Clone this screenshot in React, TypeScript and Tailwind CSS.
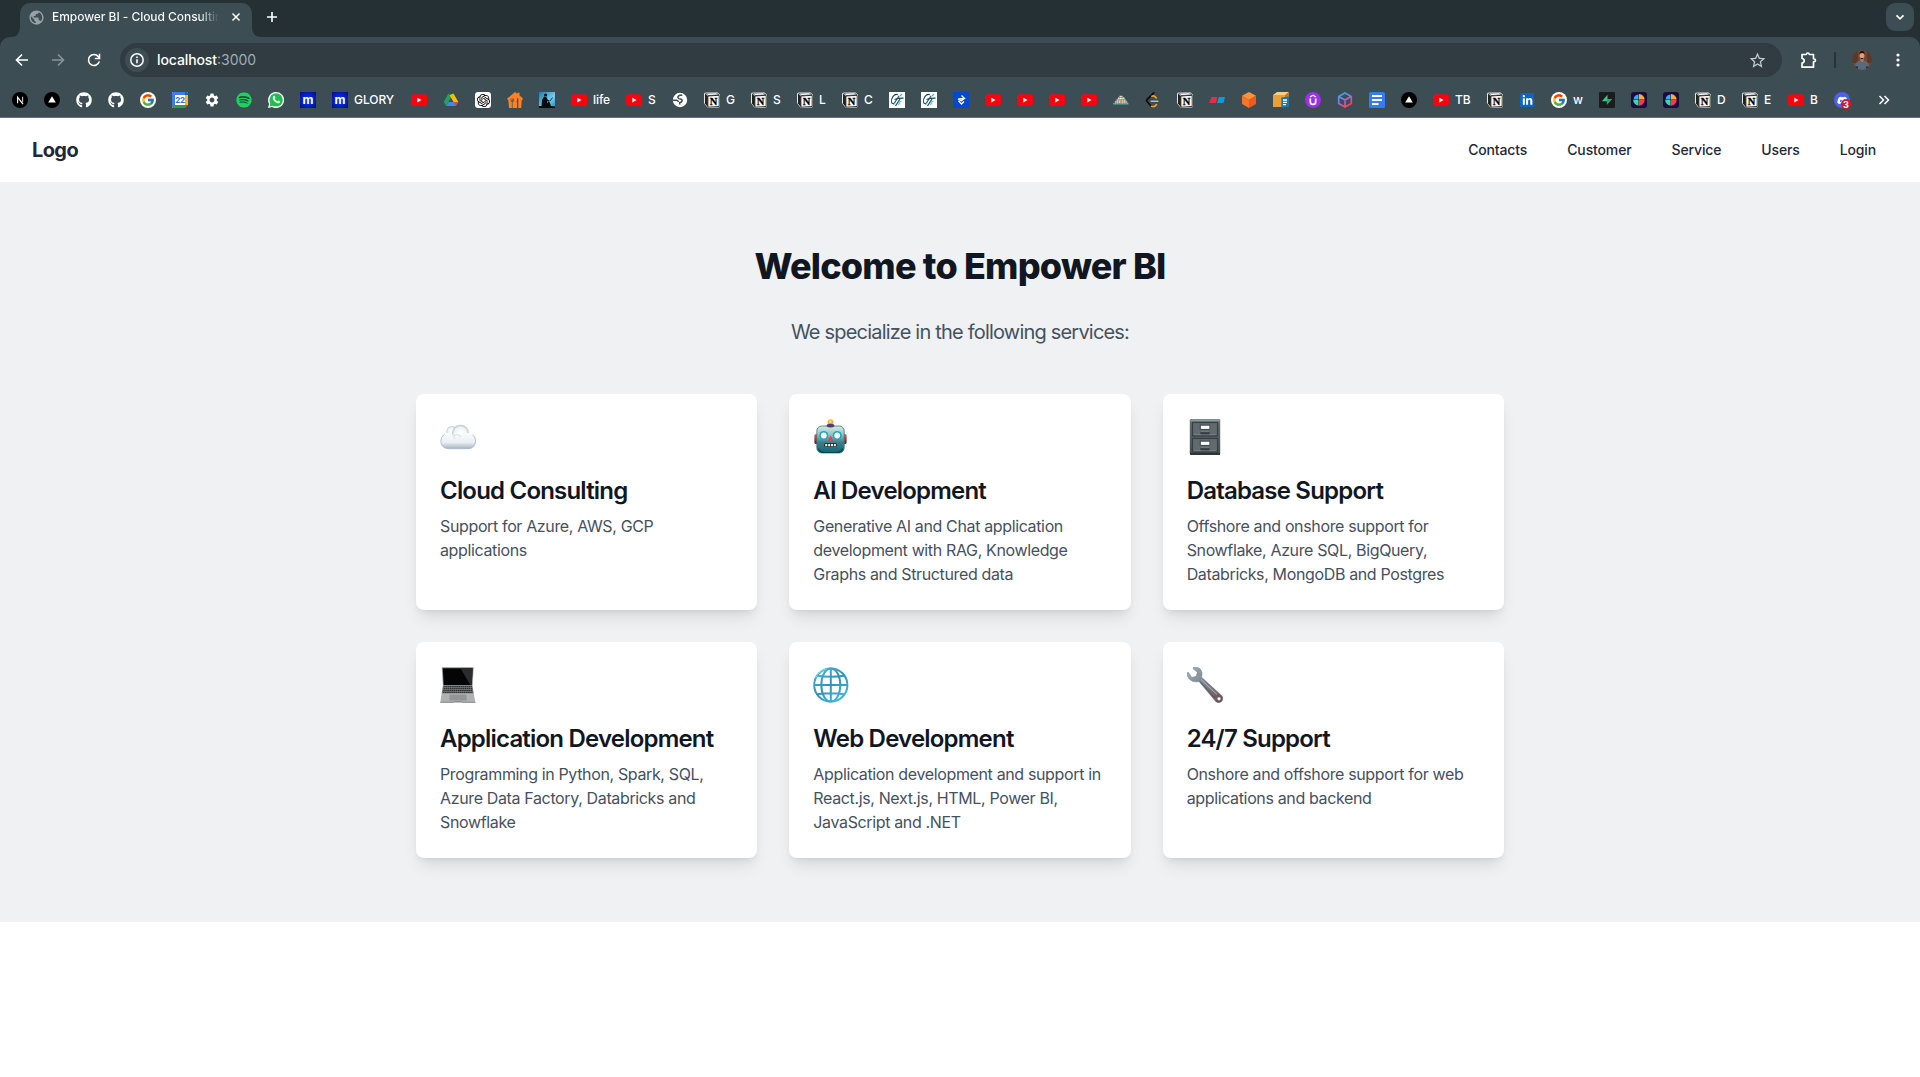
import React from "react";
import { FaGithub, FaSpotify, FaWhatsapp, FaLinkedinIn, FaDiscord } from "react-icons/fa6";
import { FcGoogle } from "react-icons/fc";
import { SiOpenai } from "react-icons/si";
import { MdSettings, MdPublic, MdStarOutline } from "react-icons/md";

type Box = { children: React.ReactNode };

const Svg = ({ children }: Box) => (
  <svg viewBox="0 0 16 16" className="h-4 w-4 shrink-0">
    {children}
  </svg>
);

const NextIcon = () => (
  <Svg>
    <circle cx="8" cy="8" r="8" fill="#000" />
    <path d="M5.600 11.200V5.200l5.400 7" fill="none" stroke="#fff" strokeWidth="1.200" />
    <path d="M10.600 4.800v5.400" stroke="#ccc" strokeWidth="1.100" />
  </Svg>
);
const VercelIcon = () => (
  <Svg>
    <circle cx="8" cy="8" r="8" fill="#000" />
    <path d="M8 4.200l3.800 6.400H4.200z" fill="#fff" />
  </Svg>
);
const GithubIcon = () => <FaGithub className="h-4 w-4 shrink-0 text-white" />;
const GoogleIcon = () => (
  <span className="flex h-4 w-4 shrink-0 items-center justify-center rounded-full bg-white">
    <FcGoogle className="h-[14px] w-[14px]" />
  </span>
);
const CalendarIcon = () => (
  <Svg>
    <path d="M0 0h16v12l-4 4H0z" fill="#fff" />
    <path d="M0 1q0-1 1-1h12v3H3v10H0z" fill="#3b7ded" />
    <path d="M13 0h2q1 0 1 1v2h-3z" fill="#1a5fc8" />
    <path d="M13 3h3v10h-3z" fill="#fbbc04" />
    <path d="M0 13h13v3H1q-1 0-1-1z" fill="#2b9e4b" />
    <path d="M13 13h3l-3 3z" fill="#ea4335" />
    <path d="M3 3h10v10H3z" fill="#fff" />
    <text x="7.900" y="11" textAnchor="middle" fontSize="8" fontWeight="700" letterSpacing="-.4" fontFamily="Inter, sans-serif" fill="#2b6fe0">
      22
    </text>
  </Svg>
);
const GearIcon = () => <MdSettings className="h-4 w-4 shrink-0 text-white" />;
const SpotifyIcon = () => (
  <span className="flex h-4 w-4 shrink-0 rounded-full bg-[#27333a]">
    <FaSpotify className="h-4 w-4 text-[#1ed15f]" />
  </span>
);
const WhatsappIcon = () => (
  <span className="relative flex h-4 w-4 shrink-0 items-center justify-center">
    <Svg>
      <path d="M8 0a8 8 0 1 1-3.800 15L0 16l1.100-4A8 8 0 0 1 8 0z" fill="#fff" />
      <circle cx="8.100" cy="7.900" r="6.700" fill="#1fbf4f" />
      <path d="M1.600 14.400l1-3.600 2.600 2.600z" fill="#1fbf4f" />
      <path
        d="M5.400 4.200c.4-.5 1.200-.5 1.400 0l.6 1.400c.1.4-.7 1-.7 1.200.5 1.200 1.400 2 2.600 2.500.3.1.8-.9 1.200-.8l1.400.7c.4.2.3 1.300-.5 1.800-2 1.200-6.600-2-6.600-5 0-.7.2-1.300.6-1.800z"
        fill="#fff"
      />
    </Svg>
  </span>
);
const MIcon = () => (
  <span className="flex h-4 w-4 shrink-0 items-center justify-center bg-[radial-gradient(circle,#0a2cf0_20%,#03107c_100%)] pb-px font-['Inter',sans-serif] text-[12px] leading-none font-bold text-white">
    m
  </span>
);
const YoutubeIcon = () => (
  <Svg>
    <rect x="0" y="2.300" width="16" height="11.600" rx="2.600" fill="#f8040f" />
    <path d="M6.300 5.800l4.200 2.300-4.200 2.300z" fill="#fff" />
  </Svg>
);
const DriveIcon = () => (
  <Svg>
    <path d="M5.500 1.500L.7 10l2.500 4L8 5.600z" fill="#1da462" />
    <path d="M5.500 1.500h5L8 5.600z" fill="#188038" />
    <path d="M10.500 1.500L15.300 10h-4.800L6.500 3.300z" fill="#fbbc04" />
    <path d="M5.500 10h9.800l-2.400 4H3.200z" fill="#4285f4" />
    <path d="M10.500 10h4.800l-2.400 4z" fill="#ea4335" />
  </Svg>
);
const OpenAiIcon = () => (
  <span className="flex h-4 w-4 shrink-0 items-center justify-center rounded-[3px] bg-white">
    <SiOpenai className="h-[13px] w-[13px] text-black" />
  </span>
);
const TakeawayIcon = () => (
  <Svg>
    <path
      d="M8 0l2.200 1.800V.8h2.300v2.800L16 6.600l-1.300 1.800-.5 7.600h-2.900V6.200c-1.500 1-1.700 3-1.700 4.400h.7V16H2L1.400 8.600 0 6.800z"
      fill="#ff8325"
    />
    <path d="M4 6.500v2.800M5.300 6.500v2.800M6.600 6.500v2.800M4 9.300h2.600M5.300 9.300V16M10.500 6v10" stroke="#3c4d54" strokeWidth=".7" fill="none" />
  </Svg>
);
const KindleIcon = () => (
  <Svg>
    <defs>
      <linearGradient id="kindle" x1="0" y1="0" x2="1" y2="1">
        <stop offset="0" stopColor="#1580ad" />
        <stop offset=".6" stopColor="#7accec" />
        <stop offset="1" stopColor="#2089b8" />
      </linearGradient>
    </defs>
    <path d="M0 0h16v16H0z" fill="url(#kindle)" />
    <circle cx="6.600" cy="3" r="1.600" fill="#050b0e" />
    <path d="M0 16v-2h2.500L3 8l2-3.500 2.500.8L9 8.300l1.500-.3-.3 1-2.200.5.5 1.800L10 8.500l2 5.500 4 .5V16z" fill="#050b0e" />
    <path d="M11 9l2.500-3.500" stroke="#050b0e" strokeWidth=".8" />
  </Svg>
);
const GlobeIcon = () => (
  <Svg>
    <circle cx="8" cy="8" r="7.200" fill="#fff" />
    <path d="M10.300 3.300H8.200Q6 3.600 5.900 5.500q.2 1.500 2.200 1.600 2 .1 2 1.700-.2 1.600-2.300 1.700v2M1 8.300h3.700q1.500.2 1.600 1.700" fill="none" stroke="#3c4d54" strokeWidth="1.500" />
  </Svg>
);
const NotionIcon = () => (
  <Svg>
    <path d="M1.600.6L11.800 0q1 0 1.600.5l2 1.700q.6.500.6 1.300v10.300q0 1.600-1.500 1.800L5 16q-1 0-1.700-.8L.7 12Q0 11.200 0 10.400V2.300Q0 .8 1.600.6z" fill="#fff" />
    <path d="M.9 1.500l2.900 2.500v11L.9 11.400z" fill="#222" />
    <path d="M1.600 1.200L12 .7l2.800 2.100-10.600.8z" fill="#fff" stroke="#111" strokeWidth=".6" />
    <path d="M3.900 4l11.300-.7v11.200l-11.300.7z" fill="#fff" stroke="#000" strokeWidth=".8" />
    <text x="9.600" y="13.100" textAnchor="middle" fontSize="10.500" fontWeight="700" fontFamily="Liberation Serif, serif" fill="#000" stroke="#000" strokeWidth=".3">
      N
    </text>
  </Svg>
);
const SwooshIcon = () => (
  <Svg>
    <path d="M0 0h16v16H0z" fill="#fff" />
    <path d="M8.800 2.600C5 1.500 1.600 6.500 2.600 10.400c.6 2 2.700 1 3.600-.6l4-6" fill="none" stroke="#1b4465" strokeWidth="1.100" />
    <path d="M5.500 7.500q4-1.500 9-1.300M6.500 14l4.500-7" fill="none" stroke="#1b4465" strokeWidth="1.200" />
    <path d="M4.500 13l2-3M9 10.500l3.500-1M11 4l2-2M9.500 13l1-2" stroke="#48b5d6" strokeWidth="1.100" />
  </Svg>
);
const DecagonIcon = () => (
  <Svg>
    <path d="M0 0h16v16H0z" fill="#0547cf" />
    <path d="M8.500 3.500l3 3-6 .5M5 7l3.500 1.800L11 6.500M5.500 8.800l3 3.200 2.500-2.500" stroke="#fff" strokeWidth="1.300" fill="none" />
  </Svg>
);
const DotsMountainIcon = () => (
  <Svg>
    <path d="M6.500 4.500h3" stroke="#efe6cf" strokeWidth="1.700" strokeDasharray="1.400 .3" />
    <path d="M5 6.300h6.500" stroke="#fff1d8" strokeWidth="1.700" strokeDasharray="1.400 .3" />
    <path d="M3.800 8.200h9" stroke="#f2b67c" strokeWidth="1.700" strokeDasharray="1.400 .3" />
    <path d="M2.200 10h12" stroke="#fff1d8" strokeWidth="1.700" strokeDasharray="1.400 .3" />
    <path d="M.3 11.800h15.400" stroke="#58c6c3" strokeWidth="1.500" strokeDasharray="1.400 .3" />
    <path d="M1.500 10.400l5-5.900M14.500 10.400l-5-5.900" stroke="#58c6c3" strokeWidth="1" strokeDasharray="1.300 .6" />
  </Svg>
);
const LeetcodeIcon = () => (
  <Svg>
    <path d="M8.800.9L2 7.700q-.8.900 0 1.800l4 4.500q.8.900 2 .9" fill="none" stroke="#0a0a0a" strokeWidth="1.700" strokeLinecap="round" />
    <path d="M6.600 14.300q2.300 1 3.600-.4l1.300-1.300M7 4.200q1.500-.7 2.700.3l1.500 1.500" fill="none" stroke="#f7a01d" strokeWidth="1.700" strokeLinecap="round" />
    <path d="M6.300 9.300h6.500" stroke="#b9b9b9" strokeWidth="1.600" strokeLinecap="round" />
  </Svg>
);
const ParallelogramIcon = () => (
  <Svg>
    <path d="M2.500 5h6L6.800 11H0z" fill="#ee2846" />
    <path d="M9.800 5H16l-1.500 6H8z" fill="#0b9bdd" />
  </Svg>
);
const CubeIcon = () => (
  <Svg>
    <path d="M8 0l7 3.800L8 8 1 3.800z" fill="#ff9138" />
    <path d="M1 3.800L8 8v8l-7-4z" fill="#fb7527" />
    <path d="M15 3.800L8 8v8l7-4z" fill="#ee5a1f" />
  </Svg>
);
const PackageIcon = () => (
  <Svg>
    <path d="M0 3l4-3h12l-3.500 3z" fill="#f8cd85" />
    <path d="M0 3h12.500v12H0z" fill="#eaa032" />
    <path d="M12.500 3L16 0v12l-3.500 3z" fill="#c47c19" />
    <path d="M8.300 5.500l7.700-1v10.300l-7.700 1z" fill="#1678ad" />
    <path d="M10 8h4M10 10.300h4M10 12.600h3" stroke="#fff" strokeWidth="1.300" />
  </Svg>
);
const UdemyIcon = () => (
  <Svg>
    <circle cx="8" cy="8" r="8" fill="#9b30e6" />
    <path d="M5.300 6.500v3.200q0 2.700 2.700 2.700t2.700-2.700V6.500" fill="none" stroke="#fff" strokeWidth="1.700" />
    <path d="M5 4.900l3-1.700 3 1.700" fill="none" stroke="#fff" strokeWidth="1.200" />
  </Svg>
);
const HexIcon = () => (
  <Svg>
    <defs>
      <linearGradient id="hex" gradientUnits="userSpaceOnUse" x1="2" y1="1" x2="11" y2="15">
        <stop offset="0" stopColor="#18b5dc" />
        <stop offset=".45" stopColor="#8f75e4" />
        <stop offset="1" stopColor="#ff3c4c" />
      </linearGradient>
    </defs>
    <path d="M8 .9l6.300 3.500v7.200L8 15.100l-6.300-3.500V4.400zM1.700 4.400L8 8l6.300-3.600M8 8v7" fill="none" stroke="url(#hex)" strokeWidth="1.700" />
  </Svg>
);
const DocsIcon = () => (
  <Svg>
    <rect width="16" height="16" rx="1.500" fill="#2f7ff0" />
    <path d="M3 4h10M3 8h10M3 12h6.500" stroke="#fff" strokeWidth="2" />
  </Svg>
);
const LinkedinIcon = () => (
  <span className="flex h-4 w-4 shrink-0 items-center justify-center">
    <span className="flex h-[14px] w-[14px] items-center justify-center rounded-[1px] bg-[#0a66c2]">
      <FaLinkedinIn className="h-[11px] w-[11px] text-white" />
    </span>
  </span>
);
const SupabaseIcon = () => (
  <Svg>
    <rect width="16" height="16" rx="1" fill="#1b1d1d" />
    <path d="M8.500 2.800v6.400H2.900z" fill="#34c98b" />
    <path d="M7.800 13V6.900h5.500z" fill="#2aa873" />
  </Svg>
);
const PieIcon = () => (
  <Svg>
    <rect width="16" height="16" rx="3" fill="#1c0b3f" />
    <path d="M7.500 7.500h-5a5.500 5.500 0 0 1 5-5z" fill="#3ba7f5" />
    <path d="M8 7.500V2a5.800 5.800 0 0 1 5.700 5.500z" fill="#fdb022" />
    <path d="M7.500 8v5.700A5.800 5.800 0 0 1 2.200 8z" fill="#3fd991" />
    <path d="M8 8h5.700A5.800 5.800 0 0 1 8 13.700z" fill="#f5375c" />
  </Svg>
);
const DiscordIcon = () => (
  <span className="relative flex h-4 w-4 shrink-0 items-center justify-center rounded-full bg-[#4c62e6]">
    <FaDiscord className="h-[11px] w-[11px] text-white" />
    <span className="absolute -right-px -bottom-px flex h-[10px] w-[10px] items-center justify-center rounded-full bg-[#e5121f] font-['Inter',sans-serif] text-[9px] leading-none font-bold text-white">
      3
    </span>
  </span>
);

const bookmarks: { icon: React.FC; label?: string; width?: string }[] = [
  { icon: NextIcon },
  { icon: VercelIcon },
  { icon: GithubIcon },
  { icon: GithubIcon },
  { icon: GoogleIcon },
  { icon: CalendarIcon },
  { icon: GearIcon },
  { icon: SpotifyIcon },
  { icon: WhatsappIcon },
  { icon: MIcon },
  { icon: MIcon, label: "GLORY", width: "w-[79px]" },
  { icon: YoutubeIcon },
  { icon: DriveIcon },
  { icon: OpenAiIcon },
  { icon: TakeawayIcon },
  { icon: KindleIcon },
  { icon: YoutubeIcon, label: "life", width: "w-[55px]" },
  { icon: YoutubeIcon, label: "S", width: "w-[46px]" },
  { icon: GlobeIcon },
  { icon: NotionIcon, label: "G", width: "w-[47px]" },
  { icon: NotionIcon, label: "S", width: "w-[46px]" },
  { icon: NotionIcon, label: "L", width: "w-[45px]" },
  { icon: NotionIcon, label: "C", width: "w-[47px]" },
  { icon: SwooshIcon },
  { icon: SwooshIcon },
  { icon: DecagonIcon },
  { icon: YoutubeIcon },
  { icon: YoutubeIcon },
  { icon: YoutubeIcon },
  { icon: YoutubeIcon },
  { icon: DotsMountainIcon },
  { icon: LeetcodeIcon },
  { icon: NotionIcon },
  { icon: ParallelogramIcon },
  { icon: CubeIcon },
  { icon: PackageIcon },
  { icon: UdemyIcon },
  { icon: HexIcon },
  { icon: DocsIcon },
  { icon: VercelIcon },
  { icon: YoutubeIcon, label: "TB", width: "w-[54px]" },
  { icon: NotionIcon },
  { icon: LinkedinIcon },
  { icon: GoogleIcon, label: "w", width: "w-12" },
  { icon: SupabaseIcon },
  { icon: PieIcon },
  { icon: PieIcon },
  { icon: NotionIcon, label: "D", width: "w-[47px]" },
  { icon: NotionIcon, label: "E", width: "w-[46px]" },
  { icon: YoutubeIcon, label: "B", width: "w-[46px]" },
  { icon: DiscordIcon },
];

const CloudArt = () => (
  <svg viewBox="0 0 36 36" className="h-9 w-9">
    <defs>
      <radialGradient id="puff" cx=".5" cy=".5" r=".5">
        <stop offset="0" stopColor="#ffffff" />
        <stop offset=".7" stopColor="#f1f5f8" />
        <stop offset="1" stopColor="#b7c5d1" />
      </radialGradient>
      <linearGradient id="cloudBase" x1="0" y1="0" x2="0" y2="1">
        <stop offset="0" stopColor="#fafcfd" />
        <stop offset=".6" stopColor="#eaeff3" />
        <stop offset="1" stopColor="#a5b4c1" />
      </linearGradient>
    </defs>
    <circle cx="12" cy="12.500" r="5.500" fill="url(#puff)" />
    <circle cx="20.500" cy="14.300" r="8.500" fill="url(#puff)" />
    <path
      d="M8.500 29.700C4 29.700.8 26.500.8 22.100s3-8 7.400-8c2 0 3.500.7 4.700 1.800 2.300-2 7.500-2.200 9.600.1 1.400-1.300 3-2 5.100-2 4.300 0 8 3.200 8 7.900s-3.200 7.800-7.500 7.800z"
      fill="url(#cloudBase)"
    />
    <path d="M4 15.500Q.8 18 .8 22.100q.3 7 7.700 7.600h19.600q7-.5 7.500-7.800-.2-4-2.800-6.200" fill="none" stroke="#aab9c6" strokeWidth=".9" />
    <path d="M13 16.500c1.100 1 1.900 2 2 3.200M13 17q4.500-3 8 .8" fill="none" stroke="#cbd6df" strokeWidth=".9" />
  </svg>
);

const RobotArt = () => (
  <svg viewBox="0 0 36 36" className="h-9 w-9">
    <defs>
      <linearGradient id="robot" x1="0" y1="0" x2="0" y2="1">
        <stop offset="0" stopColor="#d3ebe7" />
        <stop offset=".35" stopColor="#8cbfc0" />
        <stop offset=".6" stopColor="#39828c" />
        <stop offset="1" stopColor="#146473" />
      </linearGradient>
      <linearGradient id="ear" x1="0" y1="0" x2="0" y2="1">
        <stop offset="0" stopColor="#f0595a" />
        <stop offset="1" stopColor="#4c1720" />
      </linearGradient>
    </defs>
    <g transform="translate(.5 -.5)">
      <rect x=".9" y="15.500" width="4" height="10" rx="1.600" fill="url(#ear)" />
      <rect x="29.100" y="15.500" width="4" height="10" rx="1.600" fill="url(#ear)" />
      <circle cx="17" cy="3.700" r="3" fill="#f6ae35" />
      <circle cx="16.800" cy="2.900" r="1.500" fill="#ffd968" />
      <rect x="3.300" y="7.500" width="27.400" height="27" rx="5" fill="url(#robot)" stroke="#43777d" strokeWidth=".8" />
      <path d="M13 7.500q0-2.300 4-2.300t4 2.300q-1 1.500-4 1.500t-4-1.500z" fill="#533b71" />
      <path d="M5 30q1 4 6 4h12q5 0 6-4" fill="none" stroke="#0c4450" strokeWidth="1.200" />
      <circle cx="10.300" cy="17" r="4.500" fill="#1fa5bd" />
      <circle cx="23.700" cy="17" r="4.500" fill="#1fa5bd" />
      <circle cx="10.300" cy="17" r="2.900" fill="#f4feff" />
      <circle cx="23.700" cy="17" r="2.900" fill="#f4feff" />
      <path d="M17 16.800l2.800 5.500h-5.600z" fill="#e0474c" />
      <rect x="10.500" y="24.600" width="13" height="4" rx="1.600" fill="#25333c" />
      <path d="M11.700 26.600h11" stroke="#f1e9dc" strokeWidth="2.400" strokeDasharray="2 .9" />
    </g>
  </svg>
);

const CabinetArt = () => (
  <svg viewBox="0 0 36 36" className="h-9 w-9">
    <defs>
      <linearGradient id="cab" x1="0" y1="0" x2="0" y2="1">
        <stop offset="0" stopColor="#78868a" />
        <stop offset=".12" stopColor="#5f6a6e" />
        <stop offset="1" stopColor="#454d51" />
      </linearGradient>
    </defs>
    <rect x="2.800" width="30.400" height="36" rx="1.200" fill="url(#cab)" />
    <path d="M3.300 1.300h29.400" stroke="#8b999d" strokeWidth="1.600" />
    <path d="M3 34.900h30" stroke="#282e32" strokeWidth="1.600" />
    {[3.5, 19.5].map((y) => (
      <g key={y}>
        <rect x="5.500" y={y} width="25" height="13.500" fill="#616b6f" stroke="#363e42" strokeWidth="1.100" />
        <path d={`M7 ${y + 12}h22`} stroke="#79868a" strokeWidth=".7" />
        <rect x="12.800" y={y + 2.2} width="10.400" height="5" fill="#3a4246" />
        <rect x="13.800" y={y + 3.2} width="8.600" height="3.200" fill="#fbfcfc" />
        <rect x="13.300" y={y + 9} width="9.400" height="2.800" rx="1" fill="#343b3f" />
        <path d={`M13.800 ${y + 9.2}h8.400`} stroke="#8b979b" strokeWidth=".7" />
      </g>
    ))}
  </svg>
);

const LaptopArt = () => (
  <svg viewBox="0 0 36 36" className="h-9 w-9">
    <path d="M1.800.3h31.800l-1 18H2.900z" fill="#8d8f91" />
    <path d="M2.800 1.200h29.800l-.9 17H3.700z" fill="#050505" />
    <path d="M20.500 1.200h12.100l-.9 17h-1.200z" fill="#2b2c2e" />
    <path d="M3 18.200h29.400l1.400 8.600H1.600z" fill="#77797b" />
    <path d="M3.700 19.700h28.200M3.500 21.600h28.600M3.200 23.500h29.200M2.900 25.400h29.800" stroke="#2f3133" strokeWidth="1.200" strokeDasharray="1.600 .5" />
    <path d="M1.600 26.800h32.200l1.600 8.400q0 .5-.6.5H.8q-.6 0-.5-.5z" fill="#b0b1b3" />
    <path d="M9.700 27.500h16.600l.6 6H9.200z" fill="#949597" />
    <path d="M.4 35.300h12.800q.8-.7 1.500-.7h6.600q.7 0 1.500.7h12.500" stroke="#808284" strokeWidth=".8" fill="none" />
  </svg>
);

const GlobeArt = () => (
  <svg viewBox="0 0 36 36" className="h-9 w-9">
    <defs>
      <linearGradient id="globe" gradientUnits="userSpaceOnUse" x1="4" y1="0" x2="30" y2="36">
        <stop offset="0" stopColor="#43b9da" />
        <stop offset=".5" stopColor="#3291b8" />
        <stop offset="1" stopColor="#45bfe6" />
      </linearGradient>
    </defs>
    <g fill="none" stroke="url(#globe)" strokeWidth="2">
      <circle cx="17.800" cy="18" r="16.600" />
      <ellipse cx="17.800" cy="18" rx="9.500" ry="16.600" />
      <path d="M17.800 1.300v33.400M1.300 18.001h33.200M4.400 8.700q13.400 2 26.800 0M4.400 27.300q13.400-2 26.800 0" />
    </g>
    <path d="M2.500 11Q6 3.500 14 1.800" stroke="#8be4f5" strokeWidth=".8" fill="none" />
  </svg>
);

const WrenchArt = () => (
  <svg viewBox="0 0 36 36" className="h-9 w-9">
    <defs>
      <linearGradient id="wrench" x1="0" y1="0" x2="1" y2="1">
        <stop offset="0" stopColor="#a3b3bf" />
        <stop offset=".4" stopColor="#7c8993" />
        <stop offset=".75" stopColor="#75686e" />
        <stop offset="1" stopColor="#62494c" />
      </linearGradient>
    </defs>
    <path
      fillRule="evenodd"
      d="M6.500.3c5.600-1 9.400 3 8.300 8.300l-.2 1.700 19.900 18.200c2 2.200 1.500 4.700 0 6.100s-4.300 1.700-6-.3L12 14.500l-2.200.3C4.500 15.300-.5 11 .3 5.700l1.100-.3 3.200 5 4.500-.8 1.300-4.400L6 1.600zM32 29.900a1.800 1.800 0 1 0 .1 3.600 1.800 1.800 0 0 0-.1-3.600z"
      fill="url(#wrench)"
      stroke="#68727a"
      strokeWidth=".5"
    />
    <path d="M14 12.500L30 27.500" stroke="#b3bcc3" strokeWidth=".9" />
    <path d="M13 14.500L28 31" stroke="#4d4a51" strokeWidth=".8" />
  </svg>
);

const services: { art: React.FC; title: string; lines: string[] }[] = [
  { art: CloudArt, title: "Cloud Consulting", lines: ["Support for Azure, AWS, GCP", "applications"] },
  {
    art: RobotArt,
    title: "AI Development",
    lines: ["Generative AI and Chat application", "development with RAG, Knowledge", "Graphs and Structured data"],
  },
  {
    art: CabinetArt,
    title: "Database Support",
    lines: ["Offshore and onshore support for", "Snowflake, Azure SQL, BigQuery,", "Databricks, MongoDB and Postgres"],
  },
  {
    art: LaptopArt,
    title: "Application Development",
    lines: ["Programming in Python, Spark, SQL,", "Azure Data Factory, Databricks and", "Snowflake"],
  },
  {
    art: GlobeArt,
    title: "Web Development",
    lines: ["Application development and support in", "React.js, Next.js, HTML, Power BI,", "JavaScript and .NET"],
  },
  { art: WrenchArt, title: "24/7 Support", lines: ["Onshore and offshore support for web", "applications and backend"] },
];

const TabStrip = () => (
  <div className="flex h-[37px] items-end bg-[#253035] pl-[10px]">
    <svg viewBox="0 0 10 10" className="h-[10px] w-[10px]">
      <path d="M10 0v10H0Q10 10 10 0z" fill="#3c4d54" />
    </svg>
    <div className="flex h-[34px] w-[232px] items-center rounded-t-[10px] bg-[#3c4d54] pb-[6px] pl-2">
      <MdPublic className="h-[17px] w-[17px] shrink-0 text-[#98a1a5]" />
      <div className="ml-[7px] w-[167px] overflow-hidden bg-gradient-to-r from-white from-[88%] to-transparent bg-clip-text text-[12px] leading-4 font-medium tracking-[-0.05px] whitespace-nowrap text-transparent">
        Empower BI - Cloud Consulting
      </div>
      <svg viewBox="0 0 10 10" className="ml-[12px] h-[10px] w-[10px]">
        <path d="M1.500 1.500l7 7M8.500 1.500l-7 7" stroke="#fff" strokeWidth="1.500" />
      </svg>
    </div>
    <svg viewBox="0 0 10 10" className="h-[10px] w-[10px]">
      <path d="M0 0v10h10Q0 10 0 0z" fill="#3c4d54" />
    </svg>
    <svg viewBox="0 0 12 12" className="mb-[14px] ml-1 h-3 w-3">
      <path d="M6 1v10M1 6h10" stroke="#fff" strokeWidth="1.600" />
    </svg>
    <div className="mr-[6px] mb-[6px] ml-auto flex h-7 w-7 items-center justify-center rounded-[9px] bg-[#3c4d54]">
      <svg viewBox="0 0 10 10" className="h-[10px] w-[10px]">
        <path d="M1.500 3.300L5 6.800l3.500-3.500" fill="none" stroke="#fff" strokeWidth="1.800" />
      </svg>
    </div>
  </div>
);

const Toolbar = () => (
  <div className="bg-[#253035]">
    <div className="flex h-[46px] items-center rounded-t-[10px] bg-[#3c4d54] pl-[15px]">
      <svg viewBox="0 0 14 14" className="h-[14px] w-[14px]">
        <path d="M13 7H2M7 1.500L1.500 7 7 12.500" fill="none" stroke="#fff" strokeWidth="1.600" />
      </svg>
      <svg viewBox="0 0 14 14" className="ml-[22px] h-[14px] w-[14px]">
        <path d="M1 7h11M7 1.500L12.500 7 7 12.500" fill="none" stroke="#87949a" strokeWidth="1.600" />
      </svg>
      <svg viewBox="0 0 14 14" className="ml-[22px] h-[14px] w-[14px]">
        <path d="M12.300 8.400A5.500 5.500 0 1 1 11.200 3.400L12.500 4.700" fill="none" stroke="#fff" strokeWidth="1.600" />
        <path d="M12.500.8v4.700H7.800" fill="none" stroke="#fff" strokeWidth="1.600" />
      </svg>
      <div className="ml-[19px] flex h-[34px] w-[1662px] items-center rounded-full bg-[#303c42] pr-[15px] pl-[5px]">
        <div className="flex h-6 w-6 items-center justify-center rounded-full bg-[#3c4d54]">
          <svg viewBox="0 0 14 14" className="h-[14px] w-[14px]">
            <circle cx="7" cy="7" r="6.200" fill="none" stroke="#fff" strokeWidth="1.500" />
            <path d="M7 6.200v4M7 3.500v1.500" stroke="#fff" strokeWidth="1.600" />
          </svg>
        </div>
        <div className="ml-2 text-sm text-[#a3acb0]">
          <span className="font-medium tracking-[-0.1px] text-white">localhost</span>:3000
        </div>
        <MdStarOutline className="ml-auto h-[19px] w-[19px] text-[#c3c8ca]" />
      </div>
      <svg viewBox="0 0 18 18" className="ml-[18px] h-[18px] w-[18px]">
        <path
          d="M2 3.500h4.300q.2-1.500 1.500-1.500t1.500 1.500h4.200v4.200q2 .3 2 1.600t-2 1.600v5.300H2v-4q2.200-.5 2.200-2.400T2 7.400z"
          fill="none"
          stroke="#fff"
          strokeWidth="1.700"
          strokeLinejoin="round"
        />
      </svg>
      <div className="ml-4 h-4 w-[2px] rounded bg-[#263238]" />
      <svg viewBox="0 0 20 20" className="ml-4 h-5 w-5 rounded-full">
        <path d="M0 0h20v20H0z" fill="#74462f" />
        <path d="M0 0h6v13H0zM15 0h5v13h-5z" fill="#5c3829" />
        <path d="M2.500 20q-.5-8 5-9.500h5q5.500 1.500 5 9.500z" fill="#5b6a7b" />
        <path d="M8.400 8h3.200v3q-1.600 1.500-3.200 0z" fill="#b97c5d" />
        <ellipse cx="10" cy="5.400" rx="2.400" ry="3.600" fill="#d6a083" />
        <path d="M7.400 4.800Q7.200 1 10 1t2.600 3.800Q12 3 10 3.100T7.400 4.800z" fill="#15110f" />
        <path d="M8 7.500q2 1 4 0-.5 1.800-2 1.800t-2-1.800z" fill="#33211b" />
        <path d="M3 17.500h3M14 17.500h3" stroke="#222c35" strokeWidth="2" />
      </svg>
      <svg viewBox="0 0 4 16" className="ml-6 h-4 w-1">
        <circle cx="2" cy="3" r="1.600" fill="#fff" />
        <circle cx="2" cy="8" r="1.600" fill="#fff" />
        <circle cx="2" cy="13" r="1.600" fill="#fff" />
      </svg>
    </div>
  </div>
);

const BookmarkBar = () => (
  <div className="flex h-[35px] items-center border-b border-[#66747a] bg-[#3c4d54] pl-3">
    {bookmarks.map(({ icon: Icon, label, width }, i) => (
      <div key={i} className={`flex shrink-0 items-center gap-[6px] ${width ?? "w-8"}`}>
        <Icon />
        {label && <span className="text-[12px] leading-4 font-medium tracking-[-0.08px] text-white">{label}</span>}
      </div>
    ))}
    <svg viewBox="0 0 12 12" className="ml-3 h-3 w-3">
      <path d="M1.500 2l4 4-4 4M6.500 2l4 4-4 4" fill="none" stroke="#fff" strokeWidth="1.500" />
    </svg>
  </div>
);

export default function App() {
  return (
    <div className="h-[1077px] overflow-hidden bg-white font-['Inter',sans-serif]">
      <TabStrip />
      <Toolbar />
      <BookmarkBar />
      <header className="flex h-16 items-center justify-between bg-white pr-[44px] pl-8 text-[#1f2937]">
        <div className="text-xl font-bold tracking-[-0.6px]">Logo</div>
        <nav className="flex gap-10 text-sm font-medium tracking-[-0.14px]">
          <a>Contacts</a>
          <a>Customer</a>
          <a>Service</a>
          <a>Users</a>
          <a>Login</a>
        </nav>
      </header>
      <main className="bg-[#f0f1f3] py-16">
        <h1 className="text-center text-4xl font-extrabold tracking-[-0.8px] text-[#111722]">Welcome to Empower BI</h1>
        <p className="mt-8 text-center text-xl leading-7 tracking-[-0.8px] text-[#465160]">We specialize in the following services:</p>
        <div className="mx-auto mt-12 grid w-[1088px] grid-cols-3 gap-8">
          {services.map(({ art: Art, title, lines }) => (
            <section key={title} className="h-[216px] rounded-lg bg-white p-6 shadow-lg">
              <div className="flex h-10 items-start pt-px">
                <Art />
              </div>
              <h2 className="mt-[17px] text-2xl font-semibold tracking-[-0.8px] text-[#111722]">{title}</h2>
              <p className="mt-[7px] leading-6 tracking-[-0.36px] whitespace-nowrap text-[#465160]">
                {lines.map((l) => (
                  <span key={l} className="block">
                    {l}
                  </span>
                ))}
              </p>
            </section>
          ))}
        </div>
      </main>
    </div>
  );
}
